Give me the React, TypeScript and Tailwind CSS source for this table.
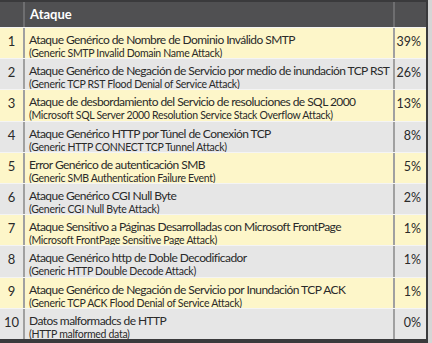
import React from "react";

const rows = [
  ["Ataque Genérico de Nombre de Dominio Inválido SMTP", "(Generic SMTP Invalid Domain Name Attack)", "39%"],
  ["Ataque Genérico de Negación de Servicio por medio de inundación TCP RST", "(Generic TCP RST Flood Denial of Service Attack)", "26%"],
  ["Ataque de desbordamiento del Servicio de resoluciones de SQL 2000", "(Microsoft SQL Server 2000 Resolution Service Stack Overflow Attack)", "13%"],
  ["Ataque Genérico HTTP por Túnel de Conexión TCP", "(Generic HTTP CONNECT TCP Tunnel Attack)", "8%"],
  ["Error Genérico de autenticación SMB", "(Generic SMB Authentication Failure Event)", "5%"],
  ["Ataque Genérico CGI Null Byte", "(Generic CGI Null Byte Attack)", "2%"],
  ["Ataque Sensitivo a Páginas Desarrolladas con Microsoft FrontPage", "(Microsoft FrontPage Sensitive Page Attack)", "1%"],
  ["Ataque Genérico http de  Doble Decodificador", "(Generic HTTP Double Decode Attack)", "1%"],
  ["Ataque Genérico de Negación de Servicio por Inundación TCP ACK", "(Generic TCP ACK Flood Denial of Service Attack)", "1%"],
  ["Datos malformadcs de HTTP", "(HTTP malformed data)", "0%"],
];

export default function App() {
  return (
    <div className="w-[432px] h-[343px] bg-[#d6d6d6] overflow-hidden" style={{ fontFamily: "Lato, 'Open Sans', sans-serif" }}>
      <div className="w-[428px] border-t-2 border-r-2 border-b-4 border-[#3a3a3c] bg-[#e6e6e6] text-[#2a2a2a]">
        <div className="flex h-[25px] bg-[#505052] text-white">
          <div className="w-[25px] border-r-2 border-[#6e6e70]" />
          <div className="flex-1 min-w-0 flex items-center pl-[5px] text-[13px] font-bold">Ataque</div>
          <div className="w-[33px] border-l-2 border-[#6e6e70]" />
        </div>
        {rows.map((r, i) => (
          <div
            key={i}
            className={`flex h-[31.2px] border-t border-[#f4f4f4] ${i % 2 === 0 ? "bg-[#fdf6c9]" : "bg-[#e6e6e6]"}`}
          >
            <div className="w-[25px] border-r-2 border-[#a0a0a0] pt-[6px] text-center text-[13px] leading-[15px]">{i + 1}</div>
            <div className="flex-1 min-w-0 pl-[4px] pt-[4px] whitespace-nowrap overflow-hidden">
              <div className="text-[12px] leading-[16px] tracking-[-0.56px]">{r[0]}</div>
              <div className="text-[10.5px] leading-[11px] tracking-[-0.3px]">{r[1]}</div>
            </div>
            <div className="w-[33px] border-l-2 border-[#a0a0a0] pt-[6px] pr-[5px] text-right text-[12.5px] leading-[15px]">{r[2]}</div>
          </div>
        ))}
      </div>
    </div>
  );
}
